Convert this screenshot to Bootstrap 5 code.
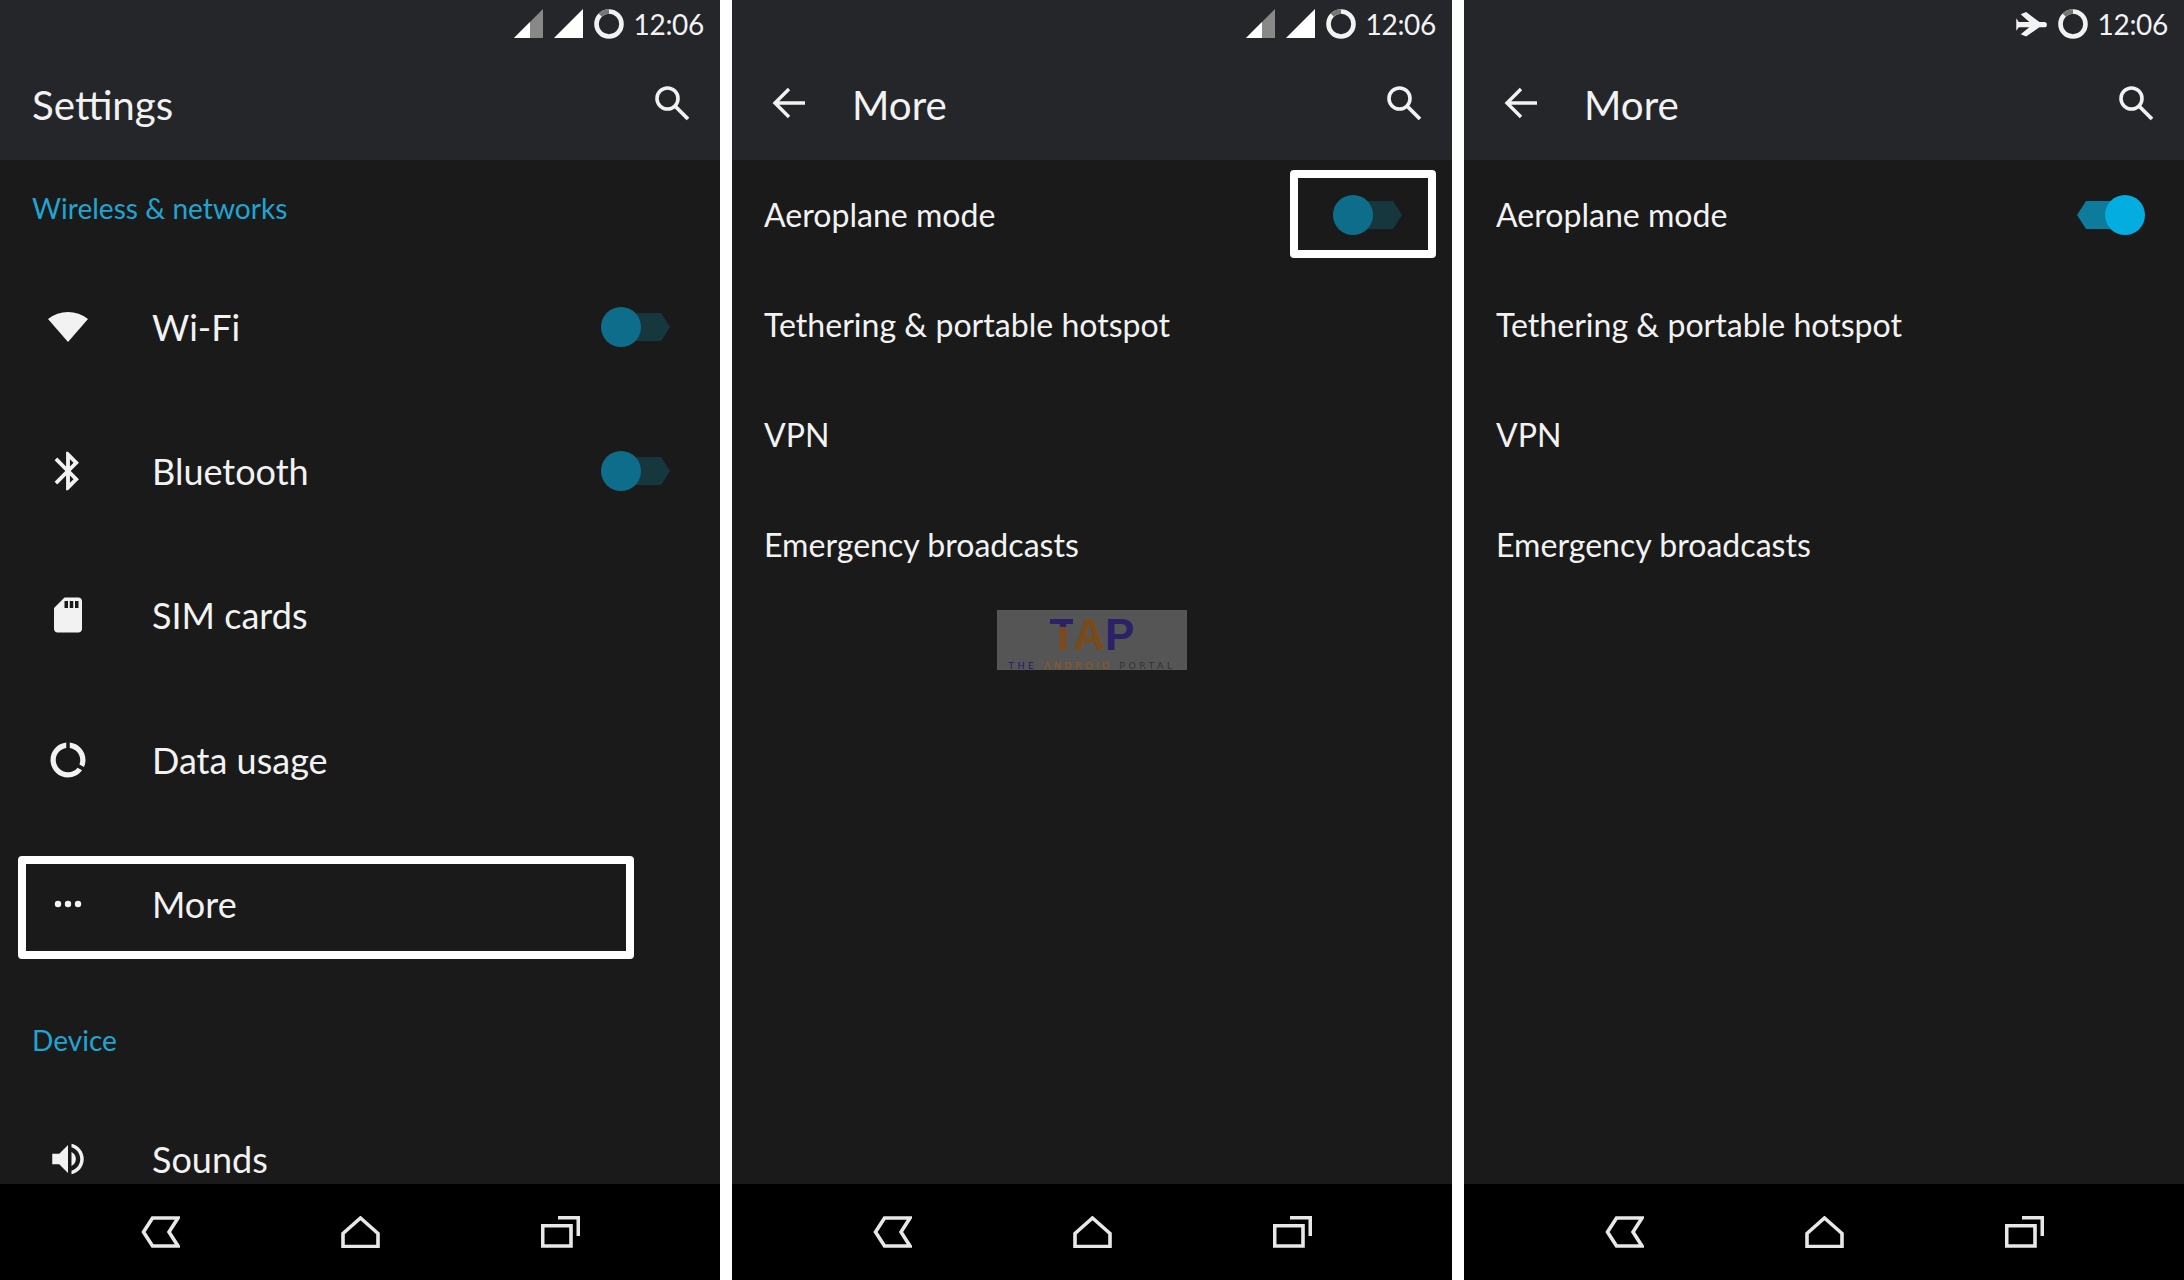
<!DOCTYPE html>
<html lang="en">
<head>
  <meta charset="UTF-8">
  <title>Settings - More</title>
  <meta name="viewport" content="width=device-width, initial-scale=1">
  <link href="https://cdn.jsdelivr.net/npm/bootstrap@5.3.0/dist/css/bootstrap.min.css" rel="stylesheet">
  <style>
    html, body { height: 100%; }
    body { background: #fff; font-family: Lato, "Open Sans", sans-serif; color: #f2f2f2; overflow: hidden; }
    svg { display: block; flex: none; fill: #f2f2f2; }

    .screens { width: 2184px; height: 1280px; gap: 12px; }
    .phone { width: 720px; height: 1280px; background: #1a1a1a; }

    .app-head { height: 160px; background: #24262a; }
    .status-row { height: 48px; padding-right: 16px; gap: 10px; }
    .status-time { font-size: 28px; line-height: 1; letter-spacing: -.3px; }
    .status-ring { width: 30px; height: 30px; }
    .tool-row { height: 112px; padding: 0 30px 0 32px; }
    .tool-row.has-back { padding-left: 40px; }
    .tool-title { font-size: 40.3px; line-height: 1; margin: 0; font-weight: 400; padding-top: 2px; }
    .has-back .tool-title { margin-left: 47px; }
    .back-arrow { width: 33px; height: 32px; margin-bottom: 2px; }
    .search-ico { width: 36px; height: 36px; margin-bottom: 2px; }

    .app-body { flex: 1 1 0; min-height: 0; overflow: hidden; }
    .sect-label { font-size: 28.1px; line-height: 34px; color: #1fa5d2; padding: 31px 32px 30px; }
    .sect-label.is-second { padding: 47px 32px 30px; }

    .app-list .list-group-item { background: transparent; color: inherit; border: 0; padding: 0; }
    .set-row { height: 144.2px; font-size: 36px; padding-left: 32px !important; }
    .set-row .ico-slot { width: 72px; margin-right: 48px; }
    .sub-row { height: 110px; font-size: 32.1px; padding: 0 32px !important; }

    .switch-off { width: 70px; height: 40px; margin-left: auto; margin-right: 49px; }
    .sub-row .switch-off { margin-right: 17px; }
    .switch-on { width: 70px; height: 40px; margin-left: auto; margin-right: 6px; }

    .hl-more { left: 18px; top: 24px; width: 616px; height: 103px; border: 8px solid #fff; border-radius: 4px; }
    .hl-switch { right: 16px; top: 10px; width: 146px; height: 88px; border: 8px solid #fff; border-radius: 4px; }

    .wm-box { width: 190px; height: 60px; margin: 10px auto 0; background: #555; }
    .wm-big { font-family: "Liberation Sans", sans-serif; font-weight: 700; font-size: 44px; line-height: 50px; height: 50px; }
    .wm-t { background: linear-gradient(#2a2168 0 35%, #7a4a1a 35% 100%); -webkit-background-clip: text; background-clip: text; color: transparent; }
    .wm-a { color: #7a4a1a; }
    .wm-p { color: #2a2168; }
    .wm-small { font-family: "DejaVu Sans", sans-serif; font-size: 9.5px; line-height: 9px; margin-top: 1px; letter-spacing: 3.4px; white-space: nowrap; }
    .wm-navy { color: #1f1a70; }
    .wm-brown { color: #94591c; }
    .wm-grey { color: #333; }

    .nav-strip { height: 96px; background: #000; }
    .nav-slot { width: 200px; }
    .nav-strip svg { fill: none; stroke: #e8e8e8; stroke-width: 3.6; }
  </style>
</head>
<body>

<!-- shared icons -->
<svg width="0" height="0" class="position-absolute">
  <symbol id="i-signal-half" viewBox="0 0 30 30"><path d="M0 29 29 0v29z" fill="#888"/><path d="M0 29 16 13v16z" fill="#fff"/></symbol>
  <symbol id="i-signal-full" viewBox="0 0 30 30"><path d="M0 29 29 0v29z" fill="#fff"/></symbol>
  <symbol id="i-ring" viewBox="0 0 30 30">
    <circle cx="15" cy="15" r="12.5" fill="none" stroke="#f2f2f2" stroke-width="4.6"/>
    <path d="M6.2 6.2A12.5 12.5 0 0 1 15 2.5" fill="none" stroke="#777" stroke-width="4.6"/>
  </symbol>
  <symbol id="i-plane" viewBox="340 30 104 84">
    <path d="M358 40 375 33 417 64H432a8.500 8.500 0 0 1 0 17H417L375 110 358 103 385 81H352L344 92V52L352 64H385z"/>
  </symbol>
  <symbol id="i-search" viewBox="0 0 36 36">
    <circle cx="13.500" cy="13.500" r="10.500" fill="none" stroke="#f2f2f2" stroke-width="3.600"/>
    <path d="M21 21 34 34" fill="none" stroke="#f2f2f2" stroke-width="3.800"/>
  </symbol>
  <symbol id="i-back" viewBox="0 0 33 32">
    <path d="M33 16H3M17 2 3 16l14 14" fill="none" stroke="#f2f2f2" stroke-width="3.400"/>
  </symbol>
  <symbol id="i-wifi" viewBox="0 0 42 32"><path d="M21 31 1 8Q10 1 21 1T41 8z"/></symbol>
  <symbol id="i-bt" viewBox="0 0 24 24"><path d="M17.710 7.710 12 2h-1v7.590L6.410 5 5 6.410 10.590 12 5 17.590 6.410 19 11 14.410V22h1l5.710-5.710-4.300-4.290 4.300-4.290zM13 5.830l1.880 1.880L13 9.590V5.830zm1.880 10.460L13 18.170v-3.760l1.880 1.880z"/></symbol>
  <symbol id="i-sim" viewBox="0 0 24 24"><path d="M18 2h-8L4.020 8 4 20c0 1.100.9 2 2 2h12c1.100 0 2-.9 2-2V4c0-1.100-.9-2-2-2zm-6 6h-2V4h2v4zm3 0h-2V4h2v4zm3 0h-2V4h2v4z"/></symbol>
  <symbol id="i-data" viewBox="0 0 24 24"><path d="M13 2.050v3.030c3.390.49 6 3.390 6 6.920 0 .9-.18 1.750-.48 2.540l2.600 1.530c.56-1.240.88-2.620.88-4.070 0-5.180-3.950-9.450-9-9.950zM12 19c-3.870 0-7-3.130-7-7 0-3.530 2.610-6.430 6-6.920V2.050c-5.060.5-9 4.760-9 9.950 0 5.520 4.470 10 9.990 10 3.310 0 6.240-1.610 8.060-4.090l-2.600-1.530C16.170 17.980 14.210 19 12 19z"/></symbol>
  <symbol id="i-dots" viewBox="0 0 28 8"><circle cx="4" cy="4" r="3.200"/><circle cx="14" cy="4" r="3.200"/><circle cx="24" cy="4" r="3.200"/></symbol>
  <symbol id="i-sound" viewBox="0 0 24 24"><path d="M3 9v6h4l5 5V4L7 9H3zm13.500 3c0-1.770-1.020-3.290-2.500-4.030v8.050c1.480-.73 2.500-2.250 2.500-4.020zM14 3.230v2.060c2.890.86 5 3.540 5 6.710s-2.110 5.850-5 6.710v2.060c4.010-.91 7-4.490 7-8.770s-2.990-7.860-7-8.770z"/></symbol>
  <symbol id="i-sw-off" viewBox="0 0 70 40">
    <path d="M20 6H60L69 20 60 34H20z" fill="#17373f"/><circle cx="20" cy="20" r="20" fill="#0f6d8c"/>
  </symbol>
  <symbol id="i-sw-on" viewBox="0 0 70 40">
    <path d="M50 6H10L1 20 10 34H50z" fill="#0e7a9c"/><circle cx="49" cy="20" r="20" fill="#04ade0"/>
  </symbol>
  <symbol id="i-nav-back" viewBox="0 0 39 32"><path d="M37 2H11.500L2.500 16 11.500 30H37L28 16z"/></symbol>
  <symbol id="i-nav-home" viewBox="0 0 39 32"><path d="M19.500 2 37 17.500V30.500H2V17.500z"/></symbol>
  <symbol id="i-nav-recent" viewBox="0 0 39 32"><path d="M1.700 9.700H30V30H1.700zM17 1.700H37.300V20"/></symbol>
</svg>

<div class="screens d-flex">

  <!-- settings -->
  <div class="phone d-flex flex-column">
    <div class="app-head">
      <div class="status-row d-flex align-items-center justify-content-end">
        <svg width="30" height="30"><use href="#i-signal-half"/></svg>
        <svg width="30" height="30"><use href="#i-signal-full"/></svg>
        <svg class="status-ring"><use href="#i-ring"/></svg>
        <span class="status-time">12:06</span>
      </div>
      <div class="tool-row d-flex align-items-center justify-content-between">
        <h1 class="tool-title">Settings</h1>
        <svg class="search-ico"><use href="#i-search"/></svg>
      </div>
    </div>
    <div class="app-body">
      <div class="sect-label">Wireless &amp; networks</div>
      <div class="list-group list-group-flush app-list">
        <div class="list-group-item set-row d-flex align-items-center">
          <span class="ico-slot d-flex justify-content-center"><svg width="42" height="32"><use href="#i-wifi"/></svg></span>Wi-Fi
          <svg class="switch-off"><use href="#i-sw-off"/></svg>
        </div>
        <div class="list-group-item set-row d-flex align-items-center">
          <span class="ico-slot d-flex justify-content-center"><svg width="46" height="46"><use href="#i-bt"/></svg></span>Bluetooth
          <svg class="switch-off"><use href="#i-sw-off"/></svg>
        </div>
        <div class="list-group-item set-row d-flex align-items-center">
          <span class="ico-slot d-flex justify-content-center"><svg width="42" height="42"><use href="#i-sim"/></svg></span>SIM cards
        </div>
        <div class="list-group-item set-row d-flex align-items-center">
          <span class="ico-slot d-flex justify-content-center"><svg width="42" height="42"><use href="#i-data"/></svg></span>Data usage
        </div>
        <div class="list-group-item set-row d-flex align-items-center position-relative">
          <span class="ico-slot d-flex justify-content-center"><svg width="28" height="8"><use href="#i-dots"/></svg></span>More
          <div class="hl-more position-absolute"></div>
        </div>
      </div>
      <div class="sect-label is-second">Device</div>
      <div class="list-group list-group-flush app-list">
        <div class="list-group-item set-row d-flex align-items-center">
          <span class="ico-slot d-flex justify-content-center"><svg width="42" height="42"><use href="#i-sound"/></svg></span>Sounds
        </div>
      </div>
    </div>
    <div class="nav-strip d-flex justify-content-center align-items-center">
      <div class="nav-slot d-flex justify-content-center"><svg width="39" height="32"><use href="#i-nav-back"/></svg></div>
      <div class="nav-slot d-flex justify-content-center"><svg width="39" height="32"><use href="#i-nav-home"/></svg></div>
      <div class="nav-slot d-flex justify-content-center"><svg width="39" height="32"><use href="#i-nav-recent"/></svg></div>
    </div>
  </div>

  <!-- more, aeroplane off -->
  <div class="phone d-flex flex-column">
    <div class="app-head">
      <div class="status-row d-flex align-items-center justify-content-end">
        <svg width="30" height="30"><use href="#i-signal-half"/></svg>
        <svg width="30" height="30"><use href="#i-signal-full"/></svg>
        <svg class="status-ring"><use href="#i-ring"/></svg>
        <span class="status-time">12:06</span>
      </div>
      <div class="tool-row has-back d-flex align-items-center">
        <svg class="back-arrow"><use href="#i-back"/></svg>
        <h1 class="tool-title">More</h1>
        <svg class="search-ico ms-auto"><use href="#i-search"/></svg>
      </div>
    </div>
    <div class="app-body">
      <div class="list-group list-group-flush app-list">
        <div class="list-group-item sub-row d-flex align-items-center position-relative">
          Aeroplane mode
          <svg class="switch-off"><use href="#i-sw-off"/></svg>
          <div class="hl-switch position-absolute"></div>
        </div>
        <div class="list-group-item sub-row d-flex align-items-center">Tethering &amp; portable hotspot</div>
        <div class="list-group-item sub-row d-flex align-items-center">VPN</div>
        <div class="list-group-item sub-row d-flex align-items-center">Emergency broadcasts</div>
      </div>
      <div class="wm-box text-center">
        <div class="wm-big"><span class="wm-t">T</span><span class="wm-a">A</span><span class="wm-p">P</span></div>
        <div class="wm-small"><span class="wm-navy">THE</span> <span class="wm-brown">ANDROID</span> <span class="wm-grey">PORTAL</span></div>
      </div>
    </div>
    <div class="nav-strip d-flex justify-content-center align-items-center">
      <div class="nav-slot d-flex justify-content-center"><svg width="39" height="32"><use href="#i-nav-back"/></svg></div>
      <div class="nav-slot d-flex justify-content-center"><svg width="39" height="32"><use href="#i-nav-home"/></svg></div>
      <div class="nav-slot d-flex justify-content-center"><svg width="39" height="32"><use href="#i-nav-recent"/></svg></div>
    </div>
  </div>

  <!-- more, aeroplane on -->
  <div class="phone d-flex flex-column">
    <div class="app-head">
      <div class="status-row d-flex align-items-center justify-content-end">
        <svg width="33" height="27"><use href="#i-plane"/></svg>
        <svg class="status-ring"><use href="#i-ring"/></svg>
        <span class="status-time">12:06</span>
      </div>
      <div class="tool-row has-back d-flex align-items-center">
        <svg class="back-arrow"><use href="#i-back"/></svg>
        <h1 class="tool-title">More</h1>
        <svg class="search-ico ms-auto"><use href="#i-search"/></svg>
      </div>
    </div>
    <div class="app-body">
      <div class="list-group list-group-flush app-list">
        <div class="list-group-item sub-row d-flex align-items-center">
          Aeroplane mode
          <svg class="switch-on"><use href="#i-sw-on"/></svg>
        </div>
        <div class="list-group-item sub-row d-flex align-items-center">Tethering &amp; portable hotspot</div>
        <div class="list-group-item sub-row d-flex align-items-center">VPN</div>
        <div class="list-group-item sub-row d-flex align-items-center">Emergency broadcasts</div>
      </div>
    </div>
    <div class="nav-strip d-flex justify-content-center align-items-center">
      <div class="nav-slot d-flex justify-content-center"><svg width="39" height="32"><use href="#i-nav-back"/></svg></div>
      <div class="nav-slot d-flex justify-content-center"><svg width="39" height="32"><use href="#i-nav-home"/></svg></div>
      <div class="nav-slot d-flex justify-content-center"><svg width="39" height="32"><use href="#i-nav-recent"/></svg></div>
    </div>
  </div>

</div>

<script src="https://cdn.jsdelivr.net/npm/bootstrap@5.3.0/dist/js/bootstrap.bundle.min.js"></script>
</body>
</html>
